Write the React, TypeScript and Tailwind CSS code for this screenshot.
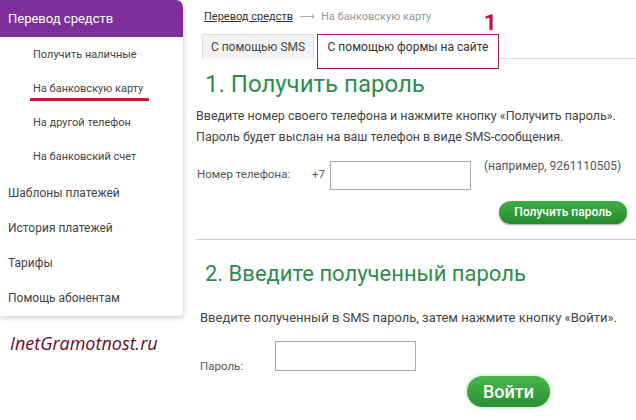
import React from "react";

export default function App() {
  return (
    <div className="w-[636px] h-[420px] bg-white flex overflow-hidden" style={{ fontFamily: "Roboto, 'Noto Sans', sans-serif" }}>
      <div className="w-[196px] shrink-0 flex flex-col">
        <div className="w-[183px] h-[316px] bg-white rounded-tr-[7px] rounded-br-[4px] shadow-[1px_2px_5px_rgba(0,0,0,0.18)] flex flex-col">
          <div className="h-[37px] bg-[#7d309c] rounded-tr-[7px] flex items-center pl-[8px] text-white text-[13px]">Перевод средств</div>
          <div className="flex flex-col text-[11px] text-[#444] pl-[33px]">
            <div className="h-[34px] mt-[1px] flex items-center">Получить наличные</div>
            <div className="h-[34px] flex items-center relative">
              На банковскую карту
              <div className="absolute left-[-3px] top-[26px] w-[119px] h-[3px] bg-[#b52334]" />
            </div>
            <div className="h-[34px] flex items-center">На другой телефон</div>
            <div className="h-[35px] flex items-center">На банковский счет</div>
          </div>
          <div className="flex flex-col text-[12px] text-[#444] pl-[8px]">
            <div className="h-[35px] flex items-center">Шаблоны платежей</div>
            <div className="h-[35px] flex items-center">История платежей</div>
            <div className="h-[35px] flex items-center">Тарифы</div>
            <div className="h-[35px] flex items-center">Помощь абонентам</div>
          </div>
        </div>
        <div className="mt-[14px] pl-[10px] text-[18px] italic text-[#6e0a2a]" style={{ fontFamily: "'Open Sans', sans-serif" }}>InetGramotnost.ru</div>
      </div>
      <div className="flex-1 flex flex-col relative">
        <div className="mt-[9px] pl-[8px] text-[11px] flex items-center gap-[6px]">
          <span className="underline text-[#333]">Перевод средств</span>
          <span className="text-[#aaa]">⟶</span>
          <span className="text-[#999]">На банковскую карту</span>
        </div>
        <div className="absolute left-[288px] top-[12px] text-[22px] font-bold text-[#c0152a] leading-none">1</div>
        <div className="mt-[8px] flex items-end h-[35px] relative">
          <div className="ml-[6px] h-[25px] w-[112px] mb-[10px] bg-[#f4f4f4] border border-[#ddd] border-b-0 flex items-center justify-center text-[12px] text-[#444]">С помощью SMS</div>
          <div className="ml-[3px] h-[35px] w-[182px] border border-[#a3243e] flex items-center justify-center text-[12px] text-[#333] pb-[9px] bg-white relative z-10">С помощью формы на сайте</div>
          <div className="flex-1 h-[1px] bg-[#ddd] mb-[10px]" />
        </div>
        <div className="mt-[3px] pl-[9px] text-[24px] text-[#2e8c4f] leading-none">1. Получить пароль</div>
        <div className="mt-[9px] text-[12.5px] text-[#444] leading-[21px]">
          <div>Введите номер своего телефона и нажмите кнопку «Получить пароль».</div>
          <div>Пароль будет выслан на ваш телефон в виде SMS-сообщения.</div>
        </div>
        <div className="mt-[14px] flex items-start text-[11.5px] text-[#555]">
          <div className="w-[116px] pl-[1px] pt-[5px]">Номер телефона:</div>
          <div className="w-[18px] pt-[5px]">+7</div>
          <div className="w-[141px] h-[29px] border border-[#aaa]" />
          <div className="ml-[13px] text-[12px] text-[#555] mt-[-4px]">(например, 9261110505)</div>
        </div>
        <div className="flex justify-end pr-[9px] mt-[11px]">
          <div className="w-[128px] h-[23px] rounded-full bg-gradient-to-b from-[#3fae45] to-[#238a2e] shadow-[0_1px_2px_rgba(0,0,0,0.35)] text-white text-[12px] font-medium flex items-center justify-center">Получить пароль</div>
        </div>
        <div className="mt-[15px] h-[1px] bg-[#ccc]" />
        <div className="mt-[23px] pl-[9px] text-[22px] text-[#2e8c4f] leading-none">2. Введите полученный пароль</div>
        <div className="mt-[23px] pl-[4px] text-[13px] text-[#444]">Введите полученный в SMS пароль, затем нажмите кнопку «Войти».</div>
        <div className="mt-[14px] flex items-start">
          <div className="w-[79px] pl-[4px] pt-[17px] text-[11.5px] text-[#555]">Пароль:</div>
          <div className="w-[141px] h-[30px] border border-[#aaa]" />
        </div>
        <div className="ml-[271px] mt-[1px] w-[83px] h-[31px] rounded-full bg-gradient-to-b from-[#48b54a] to-[#2a9233] shadow-[0_0_4px_rgba(80,200,80,0.5)] text-white text-[18px] font-medium flex items-center justify-center">Войти</div>
      </div>
    </div>
  );
}
